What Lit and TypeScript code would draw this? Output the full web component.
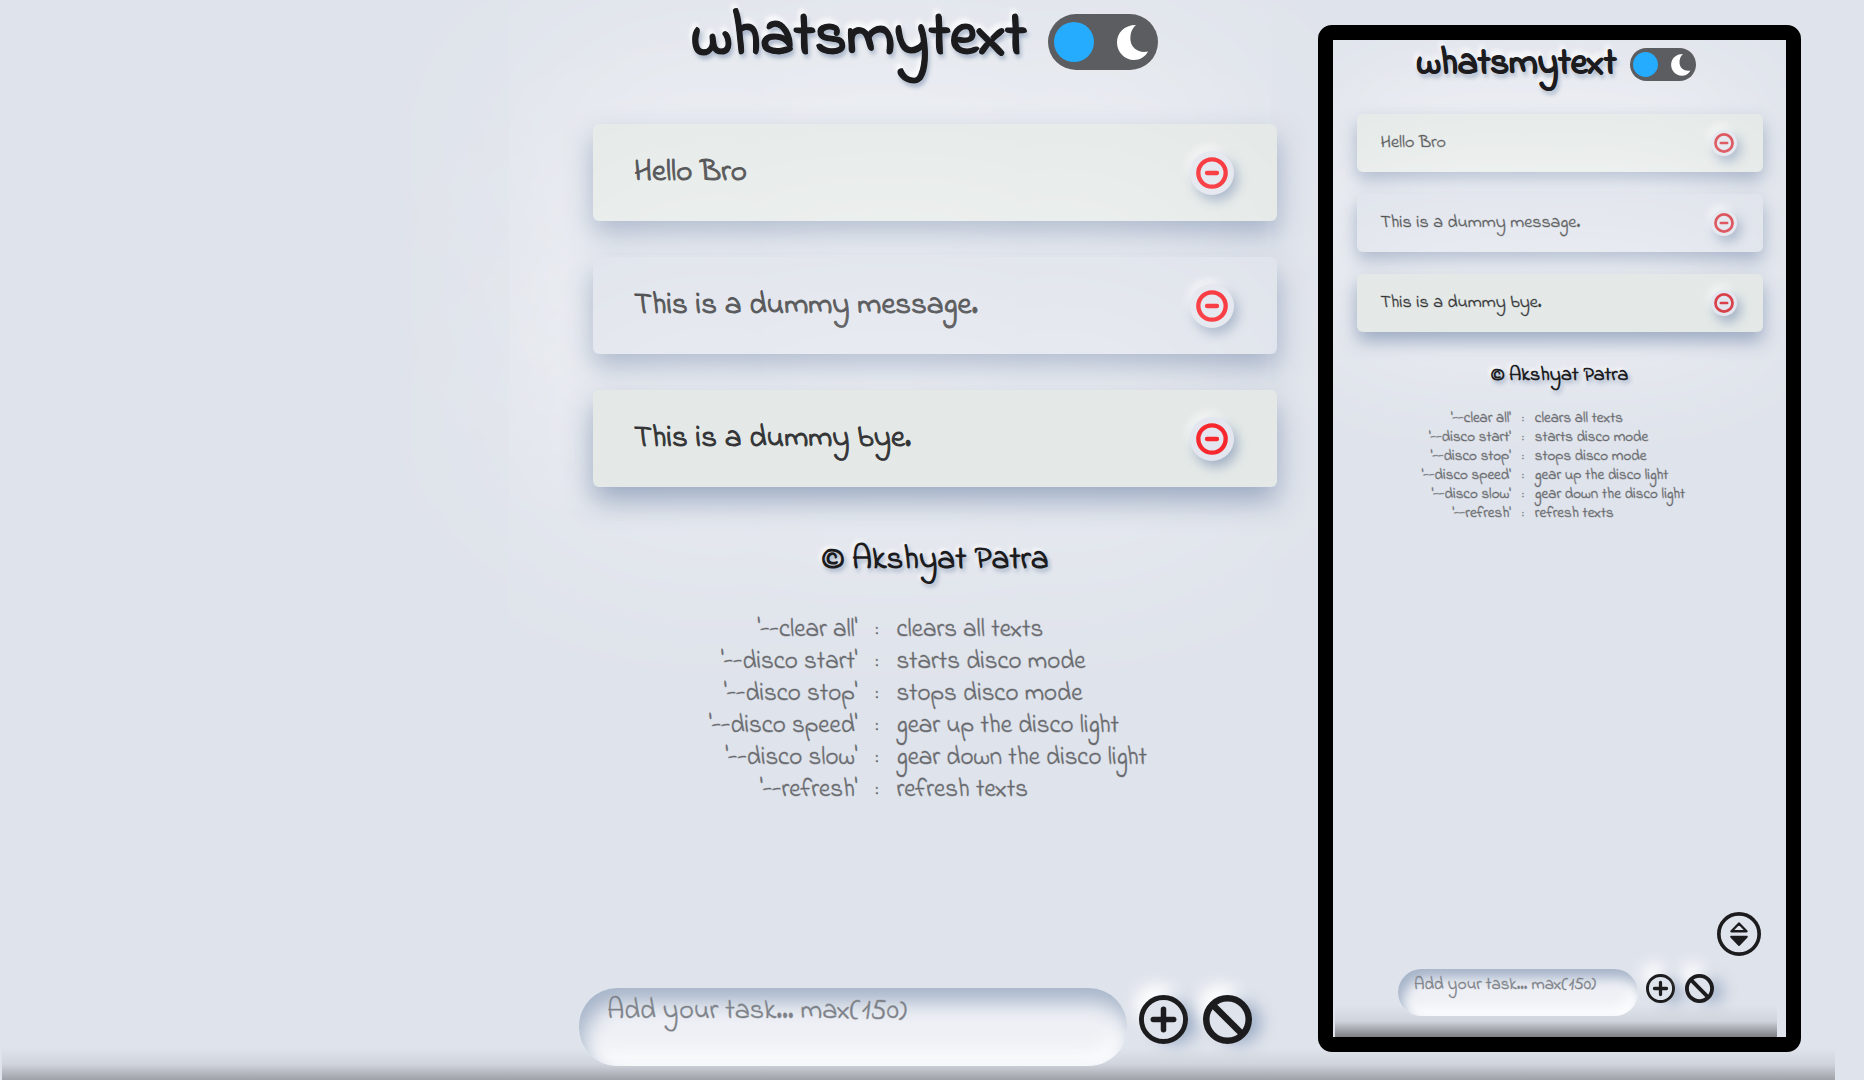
import { LitElement, html, svg, css } from "lit";
import { customElement, property, state } from "lit/decorators.js";

interface Message {
  id: number;
  text: string;
}

const MESSAGES: Message[] = [
  { id: 1, text: "Hello Bro" },
  { id: 2, text: "This is a dummy message." },
  { id: 3, text: "This is a dummy bye." },
];

const COMMANDS: [string, string][] = [
  ["'--clear all'", "clears all texts"],
  ["'--disco start'", "starts disco mode"],
  ["'--disco stop'", "stops disco mode"],
  ["'--disco speed'", "gear up the disco light"],
  ["'--disco slow'", "gear down the disco light"],
  ["'--refresh'", "refresh texts"],
];

const icon = (body: unknown) => html`
  <svg class="icon" viewBox="0 0 48 48" fill="none" stroke="currentColor" aria-hidden="true">${body}</svg>
`;

const minusIcon = icon(svg`
  <circle cx="24" cy="24" r="20.5" stroke-width="6.5"/>
  <path d="M16.5 24h15" stroke-width="6.5" stroke-linecap="round"/>`);

const plusIcon = icon(svg`
  <circle cx="24" cy="24" r="21.6" stroke-width="4.8"/>
  <path d="M24 14v20M14 24h20" stroke-width="5.4" stroke-linecap="round"/>`);

const banIcon = icon(svg`
  <circle cx="24" cy="24" r="20.8" stroke-width="6.4"/>
  <path d="M9.5 9.5l29 29" stroke-width="6.4"/>`);

const sortIcon = icon(svg`
  <circle cx="24" cy="24" r="22" stroke-width="4"/>
  <path d="M24 12.5l8.2 8.5H15.8z" stroke-width="2.6" stroke-linejoin="round"/>
  <path d="M15.4 27h17.2L24 36z" fill="currentColor" stroke-width="2" stroke-linejoin="round"/>`);

@customElement("text-board")
class TextBoard extends LitElement {
  @property({ type: Boolean, reflect: true }) compact = false;
  @state() private messages: Message[] = MESSAGES;
  @state() private draft = "";

  static styles = css`
    :host {
      --title: 62px;
      --title-line: 48px;
      --body: 31px;
      --author: 33px;
      --help: 25px;
      --help-line: 32px;
      --help-shift: 14px;
      --field: 28px;
      --head-top: 14px;
      --head-gap: 54px;
      --head-shift: 14px;
      --logo-gap: 22px;
      --toggle-w: 110px;
      --toggle-h: 56px;
      --knob: 40px;
      --toggle-pad: 6px;
      --list: 684px;
      --list-inset: 6px;
      --card-h: 97px;
      --card-gap: 36px;
      --card-pad: 0 43px 0 41px;
      --remove: 44px;
      --ring: 32px;
      --red: #f8262d;
      --lift: 14px;
      --card-soft: 28px;
      --glow: 240px;
      --glow-x: -50px;
      --glow-y: -20px;
      --foot-gap: 53px;
      --foot-line: 40px;
      --help-gap: 34px;
      --colon: 39px;
      --bar-right: 29px;
      --bar-bottom: 14px;
      --bar-shade: rgba(70, 70, 76, 0.42);
      --bar-shift: 6px;
      --input-w: 548px;
      --input-h: 78px;
      --input-pad: 10px 28px 0;
      --input-line: 28px;
      --action: 49px;
      --action-gap: 15px;
      --action-top: 7px;
      --input-gap: 12px;
      --soft: 20px;
      display: flex;
      flex-direction: column;
      position: relative;
      box-sizing: border-box;
      min-height: 100%;
      overflow: hidden;
      background: #dfe3eb;
      color: #1c1c1e;
      font-family: "Indie Flower", "Noto Sans", "Open Sans", sans-serif;
    }
    :host([compact]) {
      --title: 37px;
      --title-line: 32px;
      --body: 18px;
      --author: 20px;
      --help: 15px;
      --help-line: 19px;
      --help-shift: 12px;
      --field: 17px;
      --head-top: 8px;
      --head-gap: 33px;
      --head-shift: 6px;
      --logo-gap: 14px;
      --toggle-w: 66px;
      --toggle-h: 33px;
      --knob: 25px;
      --toggle-pad: 3px;
      --list: 406px;
      --list-inset: 0px;
      --card-h: 58px;
      --card-gap: 22px;
      --card-pad: 0 26px 0 24px;
      --remove: 26px;
      --ring: 20px;
      --red: #d9414a;
      --lift: 9px;
      --card-soft: 18px;
      --glow: 140px;
      --glow-x: -20px;
      --glow-y: -10px;
      --foot-gap: 32px;
      --foot-line: 24px;
      --help-gap: 21px;
      --colon: 24px;
      --bar-right: 9px;
      --bar-bottom: 21px;
      --bar-shade: rgba(60, 60, 64, 0.6);
      --bar-shift: 0px;
      --input-w: 240px;
      --input-h: 47px;
      --input-pad: 7px 16px 0;
      --input-line: 18px;
      --action: 29px;
      --action-gap: 10px;
      --action-top: 5px;
      --input-gap: 8px;
      --soft: 12px;
    }
    button {
      padding: 0;
      border: 0;
      color: inherit;
      cursor: pointer;
    }
    .icon {
      display: block;
      width: 100%;
      height: 100%;
    }
    .head {
      display: flex;
      justify-content: center;
      align-items: flex-start;
      gap: var(--logo-gap);
      padding: var(--head-top) var(--head-shift) var(--head-gap) 0;
      position: relative;
      z-index: 1;
    }
    .title {
      margin: 0;
      font-size: var(--title);
      line-height: var(--title-line);
      font-weight: 700;
      -webkit-text-stroke: 1px currentColor;
      text-shadow: 2px 4px 4px #a3b1c6, -2px -5px 5px #ffffff;
    }
    .toggle {
      display: grid;
      flex: none;
      width: var(--toggle-w);
      height: var(--toggle-h);
      cursor: pointer;
    }
    .toggle > * {
      grid-area: 1 / 1;
    }
    .check {
      appearance: none;
      margin: 0;
      border-radius: 999px;
      background: #5c5d60;
      cursor: pointer;
    }
    .face {
      display: flex;
      justify-content: space-between;
      align-items: center;
      padding: 0 var(--toggle-pad);
      pointer-events: none;
      z-index: 1;
    }
    .knob,
    .moon {
      width: var(--knob);
      height: var(--knob);
    }
    .knob {
      border-radius: 50%;
      background: #25acff;
    }
    .list {
      display: flex;
      flex-direction: column;
      gap: var(--card-gap);
      width: 90%;
      max-width: var(--list);
      margin: 0 auto;
      padding: 0 0 0 var(--list-inset);
      list-style: none;
    }
    .card {
      display: flex;
      align-items: center;
      justify-content: space-between;
      box-sizing: border-box;
      min-height: var(--card-h);
      padding: var(--card-pad);
      border-radius: 6px;
      background: #e4e9e7;
      color: #333436;
      font-size: var(--body);
      -webkit-text-stroke: 1px currentColor;
      box-shadow:
        0 var(--lift) var(--card-soft) rgba(142, 159, 186, 0.85),
        var(--glow-x) var(--glow-y) var(--glow) #ffffff;
    }
    :host([compact]) .card {
      -webkit-text-stroke: 1px rgba(51, 52, 54, 0.35);
    }
    .card:nth-child(even) {
      background: #dfe3eb;
    }
    .text {
      margin: 0;
    }
    .remove {
      display: grid;
      place-items: center;
      flex: none;
      width: var(--remove);
      height: var(--remove);
      border-radius: 50%;
      background: #e3e6ee;
      color: var(--red);
      box-shadow: 4px 6px 12px #a3b1c6, -3px -5px 8px rgba(255, 255, 255, 0.6);
    }
    .remove .icon {
      width: var(--ring);
      height: var(--ring);
    }
    .foot {
      display: flex;
      flex-direction: column;
      align-items: center;
      padding-left: var(--list-inset);
    }
    .author {
      margin: var(--foot-gap) 0 var(--help-gap);
      font-size: var(--author);
      line-height: var(--foot-line);
      font-weight: 700;
      text-shadow: 2px 3px 4px #a3b1c6, -2px -2px 4px #ffffff;
    }
    .help {
      margin-right: var(--help-shift);
      border-collapse: collapse;
      color: #66686c;
      font-size: var(--help);
      line-height: var(--help-line);
      -webkit-text-stroke: 1px rgba(102, 104, 108, 0.4);
    }
    .help th,
    .help td {
      padding: 0;
      font-weight: 400;
      text-align: left;
    }
    .help .cmd {
      text-align: right;
    }
    .help .sep {
      width: var(--colon);
      text-align: center;
    }
    .bar {
      display: flex;
      justify-content: center;
      align-items: flex-start;
      margin: auto var(--bar-right) 0 2px;
      padding: 40px var(--bar-shift) var(--bar-bottom) 0;
      background: linear-gradient(to top, var(--bar-shade), rgba(120, 122, 128, 0.14) 16px, transparent 32px);
    }
    .field {
      box-sizing: border-box;
      flex: 0 1 var(--input-w);
      min-width: 0;
      height: var(--input-h);
      margin: 0 var(--input-gap) 0 0;
      padding: var(--input-pad);
      border: 0;
      border-radius: 38px;
      outline: none;
      resize: none;
      overflow: hidden;
      background: #eef0f5;
      color: #1c1c1e;
      font-family: inherit;
      font-size: var(--field);
      line-height: var(--input-line);
      box-shadow:
        inset 5px var(--lift) var(--soft) #a6b4c9,
        inset -5px calc(-1 * var(--lift)) var(--soft) #fbfcfd;
    }
    .field::placeholder {
      color: #7c8087;
      opacity: 1;
      -webkit-text-stroke: 1px rgba(124, 128, 135, 0.4);
    }
    .action {
      flex: none;
      width: var(--action);
      height: var(--action);
      margin-top: var(--action-top);
      border-radius: 50%;
      background: #dfe3eb;
      box-shadow: 12px 3px 16px -3px #9fafc8, -7px -14px 16px -3px #ffffff;
    }
    .action + .action {
      margin-left: var(--action-gap);
    }
    .scroll {
      position: absolute;
      right: 25px;
      bottom: 81px;
      width: 44px;
      height: 44px;
      border-radius: 50%;
      background: transparent;
    }
  `;

  private remove(id: number) {
    this.messages = this.messages.filter((m) => m.id !== id);
  }

  private add() {
    const text = this.draft.trim();
    if (!text) return;
    this.messages = [...this.messages, { id: Date.now(), text }];
    this.draft = "";
  }

  render() {
    return html`
      <header class="head">
        <h1 class="title">whatsmytext</h1>
        <label class="toggle">
          <input class="check" type="checkbox" aria-label="Dark mode" />
          <span class="face">
            <span class="knob"></span>
            <svg class="moon" viewBox="0 0 40 40" aria-hidden="true">
              <path d="M24 3C12 3 5 11 5 20.500S12.500 38 22 38c6 0 11-3 14-8.500-9 2-16.500-3-17.500-11C18 12 19.500 7 24 3z" fill="#fff"/>
            </svg>
          </span>
        </label>
      </header>
      <ul class="list">
        ${this.messages.map(
          (m) => html`
            <li class="card">
              <p class="text">${m.text}</p>
              <button class="remove" aria-label="Remove" @click=${() => this.remove(m.id)}>${minusIcon}</button>
            </li>
          `
        )}
      </ul>
      <footer class="foot">
        <p class="author">© Akshyat Patra</p>
        <table class="help">
          <tbody>
            ${COMMANDS.map(
              ([cmd, info]) => html`
                <tr>
                  <th class="cmd" scope="row">${cmd}</th>
                  <td class="sep">:</td>
                  <td>${info}</td>
                </tr>
              `
            )}
          </tbody>
        </table>
      </footer>
      <div class="bar">
        <textarea
          class="field"
          maxlength="150"
          aria-label="Add your task"
          placeholder="Add your task... max(150)"
          .value=${this.draft}
          @input=${(e: Event) => (this.draft = (e.target as HTMLTextAreaElement).value)}
        ></textarea>
        <button class="action add" aria-label="Add" @click=${this.add}>${plusIcon}</button>
        <button class="action clear" aria-label="Clear all" @click=${() => (this.messages = [])}>${banIcon}</button>
      </div>
      ${this.compact ? html`<button class="scroll" aria-label="Scroll">${sortIcon}</button>` : null}
    `;
  }
}

@customElement("app-root")
class AppRoot extends LitElement {
  static styles = css`
    :host {
      display: grid;
      position: relative;
      min-height: 100vh;
      background: #dfe3eb;
    }
    text-board {
      isolation: isolate;
    }
    .phone {
      display: grid;
      position: absolute;
      top: 25px;
      right: 63px;
      bottom: 28px;
      width: 453px;
      border: 15px solid #000;
      border-radius: 14px;
      background: #dfe3eb;
    }
  `;

  render() {
    return html`
      <text-board></text-board>
      <aside class="phone"><text-board compact></text-board></aside>
    `;
  }
}
